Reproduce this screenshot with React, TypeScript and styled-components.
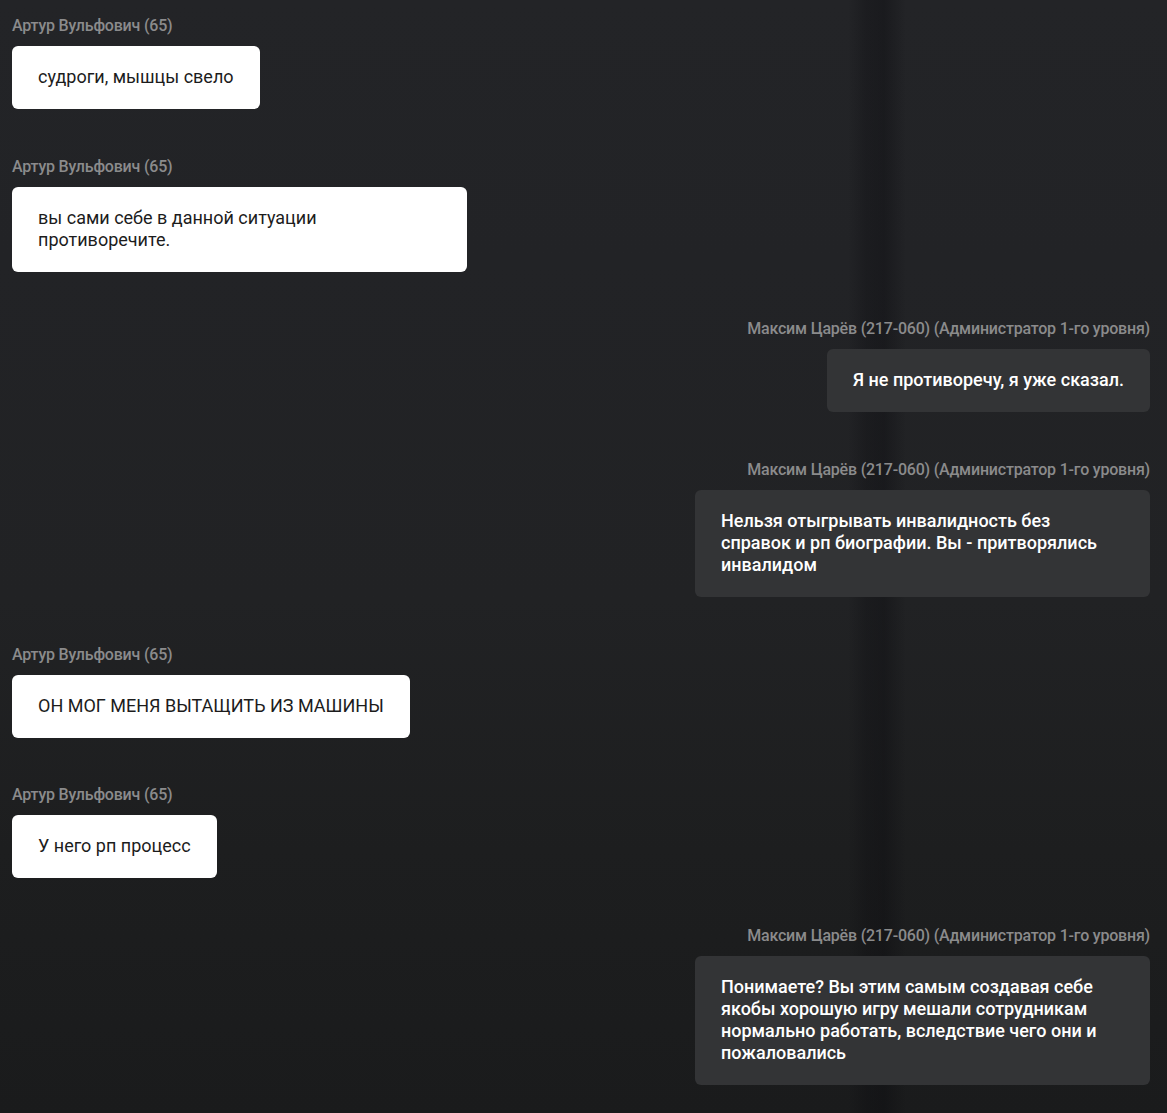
import React from "react";
import styled, { createGlobalStyle } from "styled-components";

const GlobalStyle = createGlobalStyle`
  html, body {
    margin: 0;
    padding: 0;
    background: #202124;
  }
  * { box-sizing: border-box; }
`;

const Page = styled.div`
  min-height: 1113px;
  width: 1167px;
  overflow: hidden;
  padding: 16px 17px 20px 12px;
  font-family: Roboto, "Noto Sans", "Liberation Sans", sans-serif;
  background:
    linear-gradient(
      90deg,
      rgba(0, 0, 0, 0) 0px,
      rgba(0, 0, 0, 0) 848px,
      rgba(10, 10, 14, 0.28) 866px,
      rgba(10, 10, 14, 0.36) 884px,
      rgba(0, 0, 0, 0) 906px,
      rgba(0, 0, 0, 0) 1167px
    ),
    linear-gradient(
      180deg,
      #232427 0px,
      #222326 260px,
      #212224 600px,
      #1d1e1f 850px,
      #1a1b1c 1113px
    );
  display: flex;
  flex-direction: column;
  gap: 47.7px;
`;

const Message = styled.div<{ $mine?: boolean }>`
  display: flex;
  flex-direction: column;
  align-items: ${(p) => (p.$mine ? "flex-end" : "flex-start")};
  gap: 10px;
`;

const Author = styled.div`
  font-size: 16px;
  line-height: 20px;
  font-weight: 500;
  color: #8b8b8c;
  letter-spacing: -0.2px;
  white-space: nowrap;
`;

const Bubble = styled.div<{ $mine?: boolean }>`
  max-width: 455px;
  padding: 20px 26px 21px;
  border-radius: 6px;
  font-size: 18px;
  line-height: 22px;
  font-weight: ${(p) => (p.$mine ? 500 : 400)};
  color: ${(p) => (p.$mine ? "#ffffff" : "#1c1c1c")};
  background: ${(p) => (p.$mine ? "#333436" : "#ffffff")};
`;

type Msg = { mine: boolean; author: string; text: string };

const ARTUR = "Артур Вульфович (65)";
const ADMIN = "Максим Царёв (217-060) (Администратор 1-го уровня)";

const messages: Msg[] = [
  { mine: false, author: ARTUR, text: "судроги, мышцы свело" },
  { mine: false, author: ARTUR, text: "вы сами себе в данной ситуации противоречите." },
  { mine: true, author: ADMIN, text: "Я не противоречу, я уже сказал." },
  {
    mine: true,
    author: ADMIN,
    text: "Нельзя отыгрывать инвалидность без справок и рп биографии. Вы - притворялись инвалидом",
  },
  { mine: false, author: ARTUR, text: "ОН МОГ МЕНЯ ВЫТАЩИТЬ ИЗ МАШИНЫ" },
  { mine: false, author: ARTUR, text: "У него рп процесс" },
  {
    mine: true,
    author: ADMIN,
    text: "Понимаете? Вы этим самым создавая себе якобы хорошую игру мешали сотрудникам нормально работать, вследствие чего они и пожаловались",
  },
];

export default function App() {
  return (
    <>
      <GlobalStyle />
      <Page>
        {messages.map((m, i) => (
          <Message key={i} $mine={m.mine}>
            <Author>{m.author}</Author>
            <Bubble $mine={m.mine}>{m.text}</Bubble>
          </Message>
        ))}
      </Page>
    </>
  );
}
